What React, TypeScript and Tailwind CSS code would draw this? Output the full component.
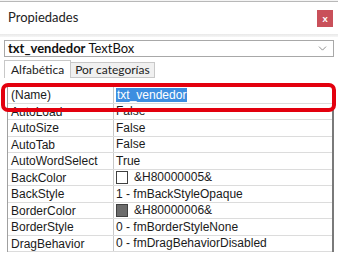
import { ChevronDown } from "lucide-react";

type Prop = { name: string; value: string; swatch?: string; selected?: boolean };

const props: Prop[] = [
  { name: "(Name)", value: "txt_vendedor", selected: true },
  { name: "AutoLoad", value: "False" },
  { name: "AutoSize", value: "False" },
  { name: "AutoTab", value: "False" },
  { name: "AutoWordSelect", value: "True" },
  { name: "BackColor", value: "&H80000005&", swatch: "#ffffff" },
  { name: "BackStyle", value: "1 - fmBackStyleOpaque" },
  { name: "BorderColor", value: "&H80000006&", swatch: "#6b6b6b" },
  { name: "BorderStyle", value: "0 - fmBorderStyleNone" },
  { name: "DragBehavior", value: "0 - fmDragBehaviorDisabled" },
];

function Row({ p }: { p: Prop }) {
  return (
    <div className="flex h-[16.5px] border-b border-[#dcdcdc] text-[12px] leading-[16px] text-[#1a1a1a]">
      <div className="w-[106px] shrink-0 border-r border-[#c8c8c8] pl-[3px] truncate">{p.name}</div>
      <div className="flex items-center pl-[2px] whitespace-nowrap">
        {p.swatch && (
          <span className="mr-[6px] inline-block h-[13px] w-[12px] border border-[#404040]" style={{ background: p.swatch }} />
        )}
        {p.selected ? (
          <span className="bg-[#3d8ee0] px-[1px] text-white leading-[14px]">{p.value}</span>
        ) : (
          <span>{p.value}</span>
        )}
      </div>
    </div>
  );
}

export default function App() {
  return (
    <div className="relative h-[254px] w-[338px] overflow-hidden bg-white" style={{ fontFamily: "Lato, 'Open Sans', sans-serif" }}>
      <div className="h-[2px] border-b border-[#b8b8b8] bg-[#f4f4f4]" />
      <div className="flex h-[32px] items-center justify-between pl-[8px] pr-[5px]">
        <span className="text-[13px] text-[#222]">Propiedades</span>
        <div className="flex h-[17px] w-[16px] items-center justify-center bg-[#c9505a] text-[10px] font-bold leading-none text-white">x</div>
      </div>
      <div className="h-[3px] bg-gradient-to-b from-[#e8e8e8] to-[#f6f6f6]" />
      <div className="mx-[4px] mt-[3px] flex h-[17px] items-center justify-between border border-[#a8a8a8] pl-[3px] pr-[4px] text-[13px] leading-none text-[#111]">
        <span>
          <b>txt_vendedor</b> TextBox
        </span>
        <ChevronDown size={13} strokeWidth={1.5} className="text-[#777]" />
      </div>
      <div className="mt-[3px] flex h-[18px] pl-[4px] text-[12px] text-[#222]">
        <div className="flex items-center border-x border-t border-[#c8c8c8] bg-white px-[6px]">Alfabética</div>
        <div className="mt-[2px] flex items-center border-r border-t border-b border-[#c8c8c8] bg-[#f0f0f0] px-[4px]">Por categorías</div>
      </div>
      <div className="ml-[7px] mr-[4px] mt-[8px] border-l border-r-2 border-t border-l-[#a0a0a0] border-r-[#7a7a7a] border-t-[#c8c8c8]" style={{ fontFamily: "'Liberation Sans', Arial, sans-serif" }}>
        {props.map((p) => (
          <Row key={p.name} p={p} />
        ))}
      </div>
      <div className="absolute left-[1px] top-[83px] h-[29px] w-[335px] rounded-[7px] border-[4.5px] border-[#e3000e]" />
    </div>
  );
}
